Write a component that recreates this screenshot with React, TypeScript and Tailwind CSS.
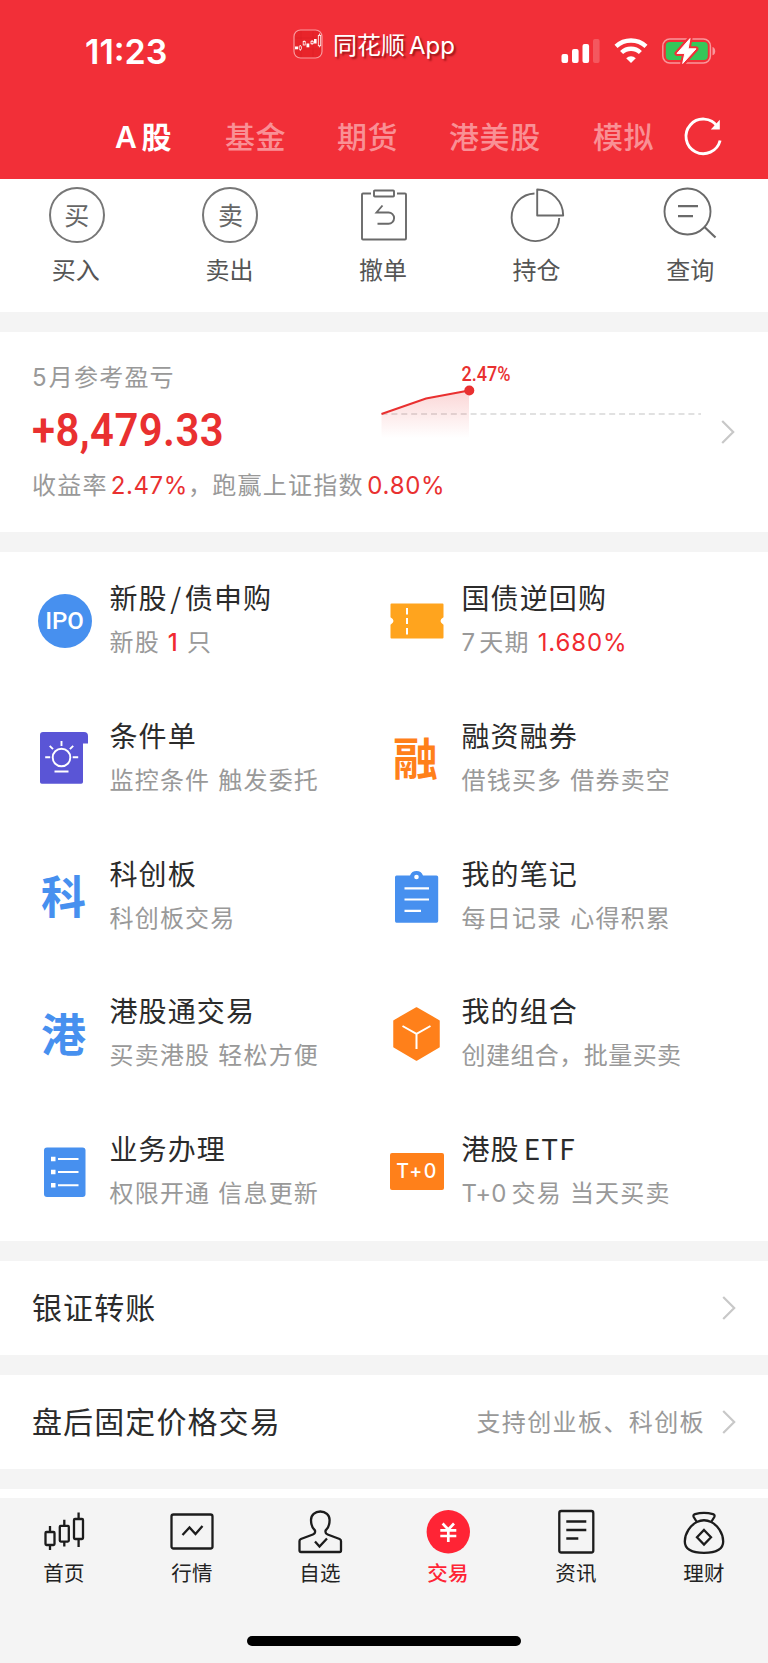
import type { ReactNode } from 'react';

const CJK = "font-['Noto_Sans_CJK_SC',sans-serif]";
const NUM = "font-['Inter','Noto_Sans_CJK_SC',sans-serif]";

function StatusIcons() {
  return (
    <svg width="156" height="30" viewBox="0 0 156 30" fill="none">
      <rect x="1.5" y="18" width="6.6" height="9" rx="2" fill="#fff" />
      <rect x="12" y="13" width="6.6" height="14" rx="2" fill="#fff" />
      <rect x="22.5" y="8" width="6.6" height="19" rx="2" fill="#fff" />
      <rect x="33" y="3" width="6.6" height="24" rx="2" fill="#fff" fillOpacity=".2" />
      <g stroke="#fff" strokeWidth="4.4">
        <path d="M56 10.4a22 22 0 0 1 30 0" />
        <path d="M61.6 16.5a13.6 13.6 0 0 1 18.8 0" />
      </g>
      <path d="M71 27 66.2 22.2a7 7 0 0 1 9.6 0Z" fill="#fff" />
      <rect x="102.8" y="3" width="47.6" height="24" rx="7" stroke="#fff" strokeOpacity=".5" strokeWidth="1.5" />
      <rect x="105.8" y="6" width="42" height="18" rx="4" fill="#35c759" />
      <path d="M152.5 11c3.6.8 3.6 7.5 0 8.3Z" fill="#fff" fillOpacity=".5" />
      <path
        d="M130 2.6 117 17.4h7.8L122.7 27.5 136 12.8h-7.9Z"
        fill="#fff"
        stroke="#f22f38"
        strokeWidth="5"
        strokeLinejoin="round"
      />
      <path d="M130 2.6 117 17.4h7.8L122.7 27.5 136 12.8h-7.9Z" fill="#fff" stroke="#fff" strokeWidth="1" strokeLinejoin="round" />
    </svg>
  );
}

function AppLogo() {
  return (
    <svg width="30" height="30" viewBox="0 0 30 30" fill="none">
      <rect x="1" y="1" width="28" height="28" rx="6.5" fill="#e8242a" stroke="#f99a9d" strokeWidth="1.2" />
      <path d="M2 9h26M2 20h26M8 2v26M20 2v26" stroke="#da1e24" strokeWidth=".5" />
      <g fill="#fff">
        <rect x="2" y="17.5" width="3" height="2.8" />
        <rect x="13.5" y="14.5" width="2.8" height="3.8" />
        <rect x="21" y="10" width="2.6" height="4.5" />
      </g>
      <g stroke="#fff" strokeWidth=".8">
        <path d="M7.3 16v1m0 3.5v1.3" />
        <rect x="6.2" y="17" width="2.2" height="3.5" rx=".6" />
        <path d="M11.2 11.5v1" />
        <rect x="10.2" y="12.5" width="2" height="3.5" />
        <rect x="18" y="12.3" width="2.2" height="2.4" />
        <path d="M19.1 11v1.3m0 2.4v1.2" />
        <path d="M26.5 4.5v1.8m0 10.5v1.5" />
        <rect x="25.3" y="6.3" width="2.4" height="10.5" />
      </g>
    </svg>
  );
}

const tabs: { key: string; label: ReactNode; cls: string }[] = [
  { key: 'a', label: <>A<span className="ml-[4px]">股</span></>, cls: 'w-[56px] ml-[115px] font-semibold text-white' },
  { key: 'fund', label: '基金', cls: 'w-[60px] ml-[54px] font-medium text-[#f99095]' },
  { key: 'futures', label: '期货', cls: 'w-[60px] ml-[52px] font-medium text-[#f99095]' },
  { key: 'hkus', label: '港美股', cls: 'w-[92px] ml-[52px] font-medium text-[#f99095]' },
  { key: 'sim', label: '模拟', cls: 'w-[60px] ml-[52px] font-medium text-[#f99095]' },
];

function RoundGlyph({ children }: { children: string }) {
  return (
    <span className="flex size-[56px] items-center justify-center rounded-full border-2 border-[#777] pb-[2px] text-[25px] leading-none text-[#666]">
      {children}
    </span>
  );
}

const actions: { label: string; icon: ReactNode }[] = [
  { label: '买入', icon: <RoundGlyph>买</RoundGlyph> },
  { label: '卖出', icon: <RoundGlyph>卖</RoundGlyph> },
  {
    label: '撤单',
    icon: (
      <svg width="56" height="56" viewBox="0 0 56 56" fill="none" stroke="#6a6a6a" strokeWidth="1.9">
        <path d="M15 6.500H7q-1 0-1 1v44q0 1 1 1h42q1 0 1-1v-44q0-1-1-1H41" />
        <rect x="18" y="3.5" width="20" height="6" rx=".8" />
        <path d="M26.500 18.500 20.500 25.500h12a5.600 5.600 0 0 1 0 11.200H21.500" />
      </svg>
    ),
  },
  {
    label: '持仓',
    icon: (
      <svg width="56" height="56" viewBox="0 0 56 56" fill="none" stroke="#6a6a6a" strokeWidth="1.9">
        <path d="M24.500 6.500A23.800 23.800 0 1 0 49.200 31" />
        <path d="M27.200 2.500v26h26a26 26 0 0 0-26-26Z" strokeLinejoin="round" />
      </svg>
    ),
  },
  {
    label: '查询',
    icon: (
      <svg width="56" height="56" viewBox="0 0 56 56" fill="none" stroke="#6a6a6a" strokeWidth="1.9">
        <circle cx="24.5" cy="24.5" r="23" />
        <path d="m41.500 40 11 10.500" strokeWidth="2.2" />
        <path d="M15 19.200h20M15 29.200h15" strokeWidth="2.2" />
      </svg>
    ),
  },
];

function Chevron() {
  return (
    <svg width="16" height="26" viewBox="0 0 16 26" fill="none" stroke="#c8c8c8" strokeWidth="2.2">
      <path d="m2.200 2 11 11-11 11" />
    </svg>
  );
}

function TrendChart() {
  return (
    <svg width="340" height="90" viewBox="0 0 340 90" fill="none">
      <defs>
        <linearGradient id="area" x1="0" y1="30" x2="0" y2="78" gradientUnits="userSpaceOnUse">
          <stop stopColor="#e93030" stopOpacity=".2" />
          <stop offset="1" stopColor="#e93030" stopOpacity="0" />
        </linearGradient>
      </defs>
      <path d="M11.500 54H331" stroke="#d8d8d8" strokeWidth="1.3" strokeDasharray="6 3.9" />
      <path d="M11.500 54 56 38.500 99 30.500V78H11.500Z" fill="url(#area)" />
      <path d="M11.500 54 56 38.500 99 30.500" stroke="#e93030" strokeWidth="2" />
      <circle cx="99.3" cy="30.5" r="5" fill="#e93030" />
      <text x="91.5" y="21" textLength="49" lengthAdjust="spacingAndGlyphs" fill="#e93030" fontFamily="Roboto" fontWeight="500" fontSize="19.5">
        2.47%
      </text>
    </svg>
  );
}

const blue = '#4790ef';
const orange = '#ff801a';

function BigGlyph({ children, color }: { children: string; color: string }) {
  return <span className={`${color} -mt-[2px] -ml-[2px] text-[45px] leading-[54px] font-bold`}>{children}</span>;
}

const services: { key: string; title: ReactNode; sub: ReactNode; icon: ReactNode }[] = [
  {
    key: 'ipo',
    title: <>新股<span className="mx-[2.5px]">/</span>债申购</>,
    sub: <>新股 <span className="font-medium text-[#f02a30]">1</span> 只</>,
    icon: (
      <span className="flex size-[54px] items-center justify-center rounded-full bg-[#4790ef] font-['Roboto'] text-[24px] font-medium text-white">
        IPO
      </span>
    ),
  },
  {
    key: 'repo',
    title: '国债逆回购',
    sub: <>7<span className="ml-[3px]">天期</span> <span className="tracking-[.9px] text-[#f02a30]">1.680%</span></>,
    icon: (
      <svg width="54" height="54" viewBox="0 0 54 54" fill="none">
        <path d="M1.500 9.500h51q1 0 1 1v12.800q-6 3.700 0 7.400v12.800q0 1-1 1h-51q-1 0-1-1V30.700q6-3.700 0-7.400V10.500q0-1 1-1Z" fill="#ffa41e" />
        <path d="M17 14v6.500M17 24v6M17 34v6.500" stroke="#fff" strokeWidth="2" />
      </svg>
    ),
  },
  {
    key: 'condition',
    title: '条件单',
    sub: '监控条件 触发委托',
    icon: (
      <svg width="54" height="54" viewBox="0 0 54 54" fill="none">
        <path d="M5 1h41q4 0 4 4v7.500h-5V51q0 1.800-1.800 1.800H3.800Q2 52.800 2 51V4Q2 1 5 1Z" fill="#5a55d6" />
        <g stroke="#fff" strokeWidth="1.9">
          <circle cx="23.5" cy="26.5" r="8.8" />
          <path d="M23.500 10v5M11.700 14.800l3.300 3.300M35.200 14.800l-3.300 3.300M7.200 26.300h5M34.700 26.300h5.500M16.500 40.500h14" />
        </g>
      </svg>
    ),
  },
  { key: 'margin', title: '融资融券', sub: '借钱买多 借券卖空', icon: <BigGlyph color="text-[#ff801a]">融</BigGlyph> },
  { key: 'star', title: '科创板', sub: '科创板交易', icon: <BigGlyph color="text-[#4790ef]">科</BigGlyph> },
  {
    key: 'notes',
    title: '我的笔记',
    sub: '每日记录 心得积累',
    icon: (
      <svg width="54" height="54" viewBox="0 0 54 54" fill="none">
        <path d="M6.500 6.500H20a7 7 0 0 1 13 0h13.500q1.700 0 1.700 1.700V52q0 1.700-1.700 1.700h-40Q5 53.700 5 52V8.200Q5 6.500 6.500 6.500Z" fill={blue} />
        <circle cx="26.5" cy="8" r="2.3" fill="#fff" />
        <path d="M14.500 19.300H39M14.500 30.500H39M14.500 41.800H31" stroke="#fff" strokeWidth="2.2" />
      </svg>
    ),
  },
  { key: 'hkconnect', title: '港股通交易', sub: '买卖港股 轻松方便', icon: <BigGlyph color="text-[#4790ef]">港</BigGlyph> },
  {
    key: 'portfolio',
    title: '我的组合',
    sub: <span className="tracking-[.45px]">创建组合，批量买卖</span>,
    icon: (
      <svg width="54" height="54" viewBox="0 0 54 54" fill="none">
        <path d="M26.500 1 49 13.800v26L26.500 53 4 39.800v-26Z" fill={orange} stroke={orange} strokeLinejoin="round" strokeWidth="1.5" />
        <path d="m12.500 19 14 7.800 14-7.800M26.500 26.800V42" stroke="#fff" strokeWidth="2" />
      </svg>
    ),
  },
  {
    key: 'business',
    title: '业务办理',
    sub: '权限开通 信息更新',
    icon: (
      <svg width="54" height="54" viewBox="0 0 54 54" fill="none">
        <rect x="6" y="2.5" width="41.5" height="49.5" rx="3" fill={blue} />
        <path d="M13 14h4.500M13 27h4.500M13 40.300h4.500" stroke="#fff" strokeWidth="4.5" />
        <path d="M20 14h20.500M20 27h20.500M20 40.300h20.500" stroke="#fff" strokeWidth="2" />
      </svg>
    ),
  },
  {
    key: 'etf',
    title: <>港股<span className="ml-[4px]">ETF</span></>,
    sub: <><span className="tracking-[.1px]">T+0</span><span className="ml-[5px]">交易</span> 当天买卖</>,
    icon: (
      <span className="flex h-[37px] w-[54px] items-center justify-center rounded-[2px] bg-[#ff801a] pl-[1px] font-['Inter'] text-[19.5px] leading-none font-medium tracking-[1.5px] text-white">
        T+0
      </span>
    ),
  },
];

const nav: { label: string; active?: boolean; icon: ReactNode }[] = [
  {
    label: '首页',
    icon: (
      <g>
        <rect x="4.5" y="23" width="9" height="13" rx="1" />
        <path d="M9 23v-6M9 36v5" />
        <rect x="18.8" y="16.8" width="9" height="15.8" rx="1" />
        <path d="M23.300 16.800v-6M23.300 32.600v5" />
        <rect x="33" y="10" width="9" height="20" rx="1" />
        <path d="M37.600 10V3.500M37.600 30v8" />
      </g>
    ),
  },
  {
    label: '行情',
    icon: (
      <g>
        <rect x="2.5" y="5.5" width="41" height="34" rx="2" />
        <path d="m13.500 26 7-7.500 6 6.500 7-8" strokeWidth="2.3" />
      </g>
    ),
  },
  {
    label: '自选',
    icon: (
      <g>
        <path d="M18 21.500c-3-2.500-4-5.500-4-10.500 0-5 4-8.500 9.300-8.500s9.300 3.500 9.300 8.500c0 5-1 8-4 10.500-.5 2 .2 3.300 2 4l12 4.500q1.400.6 1.400 2v9.500q0 1.500-1.500 1.500H4q-1.500 0-1.500-1.500V32q0-1.400 1.400-2l12-4.500c1.800-.7 2.500-2 2.100-4Z" />
        <path d="m18 32.500 4.500 5 7.500-8" strokeWidth="2.3" />
      </g>
    ),
  },
  {
    label: '交易',
    active: true,
    icon: (
      <g>
        <circle cx="23.3" cy="22.8" r="21.7" fill="#ff2435" stroke="none" />
        <path d="m17.600 14.500 5.700 6 5.700-6M15.300 21.300h16M15.300 27h16M23.300 20.500V33" stroke="#fff" strokeWidth="2.7" />
      </g>
    ),
  },
  {
    label: '资讯',
    icon: (
      <g>
        <rect x="6.3" y="2" width="34" height="41.5" rx="2" />
        <path d="M13.300 12.500h20M13.300 21h20M13.300 29.500h12" strokeWidth="2.3" />
      </g>
    ),
  },
  {
    label: '理财',
    icon: (
      <g>
        <path d="M15.500 12.500 12.700 8q-1-2 1.300-2.800c5.500-1.500 12.500-1.500 18 0q2.300.8 1.300 2.800L30.500 12.500" />
        <path d="M15.800 13c-6 3-12 11-12 19.500 0 8.500 7.500 11.300 19.200 11.300s19.200-2.800 19.200-11.300C42.200 24 36.200 16 30.200 13c-4.500-2.200-9.900-2.200-14.400 0Z" />
        <path d="m23 21 7 7.300-7 7.300-7-7.300Z" />
      </g>
    ),
  },
];

function LinkRow({ title, note }: { title: string; note?: string }) {
  return (
    <div className="mt-5 flex h-[94px] items-center justify-between bg-white pr-[31px] pl-[32px]">
      <span className="-mt-[4px] text-[30px] tracking-[1.1px] text-[#2b2b2b]">{title}</span>
      <span className="flex items-center gap-[16px] text-[24px] tracking-[1.4px] text-[#999]">
        {note && <span className="-mt-[2px]">{note}</span>}
        <Chevron />
      </span>
    </div>
  );
}

export default function App() {
  return (
    <div lang="zh-CN" className={`${CJK} flex h-[1663px] w-[768px] flex-col overflow-hidden bg-[#f4f4f4] whitespace-nowrap`}>
      <header className="h-[179px] shrink-0 bg-[#f22f38] text-white">
        <div className="flex h-[101px]">
          <div className={`${NUM} w-[293px] pt-[32px] pl-[85px] text-[34px] leading-[40px] font-semibold`}>11:23</div>
          <div className="flex w-[267px] pt-[29px]">
            <AppLogo />
            <div className={`${NUM} ml-[10px] text-[24px] leading-[34px] text-shadow-[2px_2px_2px_rgb(90_0_0/0.6)]`}>
              同花顺<span className="ml-[4px]">App</span>
            </div>
          </div>
          <div className="pt-[36px]">
            <StatusIcons />
          </div>
        </div>
        <div className={`${NUM} flex h-[72px] items-center text-[30px] leading-[44px] tracking-[.6px]`}>
          {tabs.map((t) => (
            <div key={t.key} className={t.cls}>{t.label}</div>
          ))}
          <svg className="ml-[30px]" width="40" height="44" viewBox="0 0 40 44" fill="none" stroke="#fff" strokeWidth="2.9">
            <path d="M34.500 11.500A17.300 17.300 0 1 0 37.100 25.500" />
            <path d="M36.800 4.800v9.800h-9Z" fill="#fff" stroke="none" />
          </svg>
        </div>
      </header>

      <section className="grid h-[133px] shrink-0 grid-cols-5 bg-white pt-[8px]">
        {actions.map((a) => (
          <div key={a.label} className="flex flex-col items-center">
            {a.icon}
            <span className="mt-[8px] mr-[2px] text-[24px] leading-[36px] text-[#555]">{a.label}</span>
          </div>
        ))}
      </section>

      <section className="mt-5 flex h-[200px] shrink-0 items-start bg-white pl-[32px]">
        <div className={`${NUM} w-[338px] pt-[28px]`}>
          <div className="text-[24px] leading-[36px] tracking-[1.2px] text-[#999]">5<span className="ml-[1px]">月参考盈亏</span></div>
          <div className="mt-[6px] origin-left scale-x-[.89] font-['Roboto'] text-[47px] leading-[56px] font-semibold tracking-[.5px] text-[#e93030]">
            +8,479.33
          </div>
          <div className="mt-[10px] text-[24px] leading-[36px] tracking-[1.25px] text-[#999]">
            收益率<span className="ml-[3px] tracking-[.6px] text-[#e93030]">2.47%</span>
            <span className="tracking-[.4px]">，</span>跑赢上证指数<span className="ml-[3.5px] tracking-[.7px] text-[#e93030]">0.80%</span>
          </div>
        </div>
        <div className="w-[350px] pt-[28px]">
          <TrendChart />
        </div>
        <div className="pt-[87px]">
          <Chevron />
        </div>
      </section>

      <section className="mt-5 grid h-[689px] shrink-0 grid-cols-[352px_1fr] grid-rows-5 bg-white pl-[37.5px]">
        {services.map((s) => (
          <div key={s.key} className="flex">
            <div className="flex h-[137px] w-[54px] shrink-0 items-center justify-center">{s.icon}</div>
            <div className={`${NUM} ml-[18px] pt-[24px]`}>
              <div className={`${CJK} text-[28px] leading-[42px] tracking-[1.1px] text-[#2b2b2b]`}>{s.title}</div>
              <div className="mt-[7px] text-[24px] leading-[36px] tracking-[1.2px] text-[#999]">{s.sub}</div>
            </div>
          </div>
        ))}
      </section>

      <LinkRow title="银证转账" />
      <LinkRow title="盘后固定价格交易" note="支持创业板、科创板" />
      <div className="mt-5 h-[9px] shrink-0 bg-white" />

      <nav className="grid h-[165px] shrink-0 grid-cols-6 grid-rows-[90px_1fr] bg-[#f4f4f4] pt-[11px]">
        {nav.map((n) => (
          <div key={n.label} className={n.active ? 'flex flex-col items-center font-medium text-[#ff2435]' : 'flex flex-col items-center text-[#222]'}>
            <svg width="46" height="46" viewBox="0 0 46 46" fill="none" stroke="#1c1c1c" strokeWidth="2.3">
              {n.icon}
            </svg>
            <span className="mt-[2px] text-[20.5px] leading-[30px] tracking-[.3px]">{n.label}</span>
          </div>
        ))}
        <div className="col-span-6 flex justify-center pt-[37px]">
          <div className="h-[10px] w-[274px] rounded-full bg-black" />
        </div>
      </nav>
    </div>
  );
}
